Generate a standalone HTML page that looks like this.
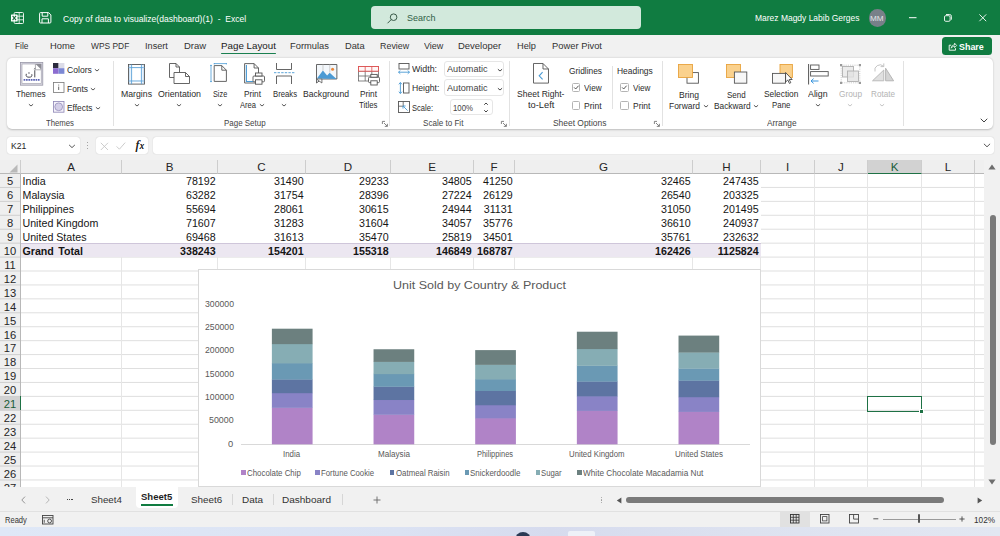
<!DOCTYPE html>
<html><head><meta charset="utf-8"><title>Excel</title>
<style>
*{box-sizing:border-box;margin:0;padding:0}
html,body{width:1000px;height:536px;overflow:hidden;background:#f1f1f1;font-family:"Liberation Sans",sans-serif;font-size:9px;color:#222}
div,span{position:absolute;white-space:nowrap}
svg{position:absolute;overflow:visible}
#title{left:0;top:0;width:1000px;height:35px;background:#107c41}
#ribbon{left:7px;top:57.5px;width:986px;height:71.5px;background:#fff;border-radius:5px;box-shadow:0 0.5px 2px rgba(0,0,0,.22)}
.sep{top:61px;width:1px;height:65px;background:#e2e2e2}
.box{background:#fff;border-radius:3px;height:17.5px;top:136.8px;box-shadow:0 0 1px rgba(0,0,0,.25)}
.dd{background:#fff;border:1px solid #e6e6e6;border-radius:3px}
.cb{width:8.6px;height:8.6px;border:1px solid #b4b4b4;border-radius:1.5px;background:#fff}
#grid{left:0;top:160px;width:984px;height:328px;background:#fff;overflow:hidden}
.ch{top:0;height:14px;background:#efefef;border-right:1px solid #cdcdcd;border-bottom:1px solid #b8b8b8;font-size:11.6px;text-align:center;line-height:14.6px;color:#262626}
.rh{left:0;width:21px;height:14.5px;background:#efefef;border-right:1px solid #b8b8b8;font-size:11.2px;text-align:center;line-height:15.4px;color:#262626}
.vl{top:14px;width:1px;height:314px;background:#e6e6e6}
.hl{left:21px;height:1px;width:963px;background:#e3e3e3}
.c{font-size:10.67px;line-height:14px;color:#151515}
.r{text-align:right}
.b{font-weight:bold;word-spacing:1.5px}
</style></head><body>
<div id="title"></div>
<svg style="left:11.4px;top:11.6px" width="13.0" height="12.0" viewBox="0 0 13.0 12.0"><rect x="3.2" y="0.5" width="9.3" height="11" rx="1" fill="none" stroke="#e8f3ec" stroke-width="1"/><path d="M8.2 0.5V11.5M3.2 4.2h9.3M3.2 7.8h9.3" stroke="#e8f3ec" stroke-width="0.9"/><rect x="0" y="2.4" width="6.6" height="7.2" rx="0.6" fill="#fff"/><path d="M1.6 3.9l3.4 4.2M5 3.9L1.6 8.1" stroke="#1c6b3d" stroke-width="1.1"/></svg>
<svg style="left:39.1px;top:11.7px" width="12.5" height="11.5" viewBox="0 0 12.5 11.5"><path d="M1.5 0.6h8l2.4 2.3v7.2a0.9 0.9 0 0 1-0.9 0.9h-9.5a0.9 0.9 0 0 1-0.9-0.9v-8.6a0.9 0.9 0 0 1 0.9-0.9z" fill="none" stroke="#fff" stroke-width="1"/><path d="M3.2 0.8v3.4h5.6v-3.4M3 11v-4.2h6.4v4.2" fill="none" stroke="#fff" stroke-width="1"/></svg>
<span style="left:62.6px;top:11.6px;line-height:14px;font-size:9.30px;color:#fff;transform:scaleX(0.921);transform-origin:0 50%;white-space:pre;">Copy of data to visualize(dashboard)(1)  -  Excel</span>
<div style="left:371.3px;top:6px;width:269.5px;height:23px;background:#d2e9dc;border-radius:4px"></div>
<svg style="left:386.5px;top:12.5px" width="11.0" height="11.0" viewBox="0 0 11.0 11.0"><circle cx="6.6" cy="4.2" r="3.3" fill="none" stroke="#3a5a48" stroke-width="1"/><path d="M4.2 6.6L0.8 10" stroke="#3a5a48" stroke-width="1" stroke-linecap="round"/></svg>
<span style="left:406.9px;top:11.3px;line-height:14px;font-size:9.60px;color:#2f5e46;transform:scaleX(0.934);transform-origin:0 50%;">Search</span>
<span style="left:755.3px;top:11.4px;line-height:14px;font-size:9.30px;color:#fff;transform:scaleX(0.911);transform-origin:0 50%;">Marez Magdy Labib Gerges</span>
<div style="left:868.6px;top:9.3px;width:17.4px;height:17.4px;border-radius:9px;background:#788089"></div>
<span style="left:870.2px;top:11.5px;line-height:14px;font-size:7.80px;color:#e4e6e8;transform:scaleX(1.047);transform-origin:0 50%;">MM</span>
<svg style="left:909.0px;top:17.0px" width="8.0" height="2.0" viewBox="0 0 8.0 2.0"><path d="M0 0.7h7.5" stroke="#fff" stroke-width="1"/></svg>
<svg style="left:943.5px;top:14.0px" width="8.0" height="8.0" viewBox="0 0 8.0 8.0"><rect x="0.5" y="1.7" width="5.6" height="5.6" rx="1.2" fill="none" stroke="#fff" stroke-width="0.9"/><path d="M2 0.5h3.6a1.8 1.8 0 0 1 1.8 1.8v3.4" fill="none" stroke="#fff" stroke-width="0.9"/></svg>
<svg style="left:978.6px;top:14.3px" width="8.0" height="8.0" viewBox="0 0 8.0 8.0"><path d="M0.4 0.4l6.8 6.8M7.2 0.4L0.4 7.2" stroke="#fff" stroke-width="0.9"/></svg>
<span style="left:15.0px;top:39.3px;line-height:14px;font-size:9.60px;color:#333;transform:scaleX(0.873);transform-origin:0 50%;">File</span>
<span style="left:49.6px;top:39.3px;line-height:14px;font-size:9.60px;color:#333;transform:scaleX(0.976);transform-origin:0 50%;">Home</span>
<span style="left:90.9px;top:39.3px;line-height:14px;font-size:9.60px;color:#333;transform:scaleX(0.876);transform-origin:0 50%;">WPS PDF</span>
<span style="left:145.4px;top:39.3px;line-height:14px;font-size:9.60px;color:#333;transform:scaleX(0.954);transform-origin:0 50%;">Insert</span>
<span style="left:184.0px;top:39.3px;line-height:14px;font-size:9.60px;color:#333;transform:scaleX(0.987);transform-origin:0 50%;">Draw</span>
<span style="left:220.9px;top:39.3px;line-height:14px;font-size:9.60px;color:#1a1a1a;transform:scaleX(1.018);transform-origin:0 50%;">Page Layout</span>
<span style="left:290.1px;top:39.3px;line-height:14px;font-size:9.60px;color:#333;transform:scaleX(0.975);transform-origin:0 50%;">Formulas</span>
<span style="left:344.6px;top:39.3px;line-height:14px;font-size:9.60px;color:#333;transform:scaleX(0.967);transform-origin:0 50%;">Data</span>
<span style="left:379.8px;top:39.3px;line-height:14px;font-size:9.60px;color:#333;transform:scaleX(0.928);transform-origin:0 50%;">Review</span>
<span style="left:423.9px;top:39.3px;line-height:14px;font-size:9.60px;color:#333;transform:scaleX(0.940);transform-origin:0 50%;">View</span>
<span style="left:458.0px;top:39.3px;line-height:14px;font-size:9.60px;color:#333;transform:scaleX(0.987);transform-origin:0 50%;">Developer</span>
<span style="left:516.6px;top:39.3px;line-height:14px;font-size:9.60px;color:#333;transform:scaleX(0.962);transform-origin:0 50%;">Help</span>
<span style="left:552.3px;top:39.3px;line-height:14px;font-size:9.60px;color:#333;transform:scaleX(0.976);transform-origin:0 50%;">Power Pivot</span>
<div style="left:221.3px;top:52.7px;width:55px;height:1.8px;background:#1a8050;border-radius:1px"></div>
<div style="left:941.6px;top:37.3px;width:50px;height:17.6px;background:#107c41;border-radius:3.5px"></div>
<svg style="left:947.5px;top:42.0px" width="9.0" height="9.0" viewBox="0 0 9.0 9.0"><path d="M3.2 3.2H1.2v5h6.3V6.2" fill="none" stroke="#fff" stroke-width="0.9"/><path d="M3.2 6.2c0.2-2 1.4-3.2 3.4-3.3V1.2L8.6 3.5 6.6 5.6V4.3c-1.6 0-2.6 0.6-3.4 1.9z" fill="none" stroke="#fff" stroke-width="0.8" stroke-linejoin="round"/></svg>
<span style="left:958.8px;top:39.8px;line-height:14px;font-size:9.60px;color:#fff;font-weight:bold;transform:scaleX(0.930);transform-origin:0 50%;">Share</span>
<div id="ribbon"></div>
<div class="sep" style="left:113.0px"></div>
<div class="sep" style="left:389.4px"></div>
<div class="sep" style="left:508.8px"></div>
<div class="sep" style="left:661.6px"></div>
<div class="sep" style="left:903.2px"></div>
<div style="left:612.2px;top:66px;width:1px;height:43px;background:#e2e2e2"></div>
<svg style="left:20.0px;top:62.0px" width="23.2" height="23.6" viewBox="0 0 23.2 23.6"><rect x="0.4" y="0.4" width="22.4" height="22.8" fill="#d9d8e2" stroke="#9a98a8" stroke-width="0.8"/><rect x="2" y="2" width="19.2" height="19.6" fill="#fff" stroke="#9c9aa8" stroke-width="0.6"/><path d="M15.6 2h5.6v5.6z" fill="#8c8c94"/><path d="M15.4 2.2v5.6h5.6" fill="none" stroke="#77777f" stroke-width="0.6"/><path d="M6.2 12.2c-0.6 2.6 1 3 2.9 3s3.2-0.4 2.8-2.6M14.8 8.6v6.4" stroke="#4a4a52" stroke-width="1" fill="none" stroke-linecap="round"/><circle cx="9" cy="11" r="0.7" fill="#4a4a52"/><path d="M13.9 7.2l1.4-0.9" stroke="#4a4a52" stroke-width="0.8"/><path d="M3.6 17.8h16" stroke="#5a62b4" stroke-width="1.7" stroke-dasharray="1.7 0.7"/></svg>
<span style="left:16.0px;top:86.8px;line-height:14px;font-size:9.30px;color:#2b2b2b;transform:scaleX(0.881);transform-origin:0 50%;">Themes</span>
<svg style="left:26.6px;top:102.0px" width="8" height="6"><path d="M2.2 2.5 L4 4.0 L5.8 2.5" fill="none" stroke="#444" stroke-width="0.9" stroke-linecap="round" stroke-linejoin="round"/></svg>
<svg style="left:53.1px;top:63.4px" width="11.4" height="10.8" viewBox="0 0 11.4 10.8"><rect x="0" y="0" width="5.6" height="5.2" fill="#2b2b3d"/><rect x="5.6" y="0" width="5.8" height="5.2" fill="#dcdce8"/><rect x="0" y="5.2" width="5.6" height="5.6" fill="#8c6cd0"/><rect x="5.6" y="5.2" width="5.8" height="5.6" fill="#7c88d4"/></svg>
<span style="left:67.2px;top:62.9px;line-height:14px;font-size:9.30px;color:#2b2b2b;transform:scaleX(0.923);transform-origin:0 50%;">Colors</span>
<svg style="left:93.0px;top:67.0px" width="8" height="6"><path d="M2.2 2.5 L4 4.0 L5.8 2.5" fill="none" stroke="#444" stroke-width="0.9" stroke-linecap="round" stroke-linejoin="round"/></svg>
<svg style="left:53.0px;top:82.4px" width="11.4" height="11.0" viewBox="0 0 11.4 11.0"><rect x="0.4" y="0.4" width="10.6" height="10.2" fill="#fff" stroke="#777" stroke-width="0.8"/><path d="M5.7 4.6v3.4M5.7 2.6v0.9" stroke="#555" stroke-width="0.9"/></svg>
<span style="left:67.2px;top:81.7px;line-height:14px;font-size:9.30px;color:#2b2b2b;transform:scaleX(0.903);transform-origin:0 50%;">Fonts</span>
<svg style="left:89.4px;top:85.8px" width="8" height="6"><path d="M2.2 2.5 L4 4.0 L5.8 2.5" fill="none" stroke="#444" stroke-width="0.9" stroke-linecap="round" stroke-linejoin="round"/></svg>
<svg style="left:53.0px;top:101.4px" width="11.4" height="11.6" viewBox="0 0 11.4 11.6"><rect x="0.4" y="0.4" width="10.6" height="10.8" fill="#f4f2fa" stroke="#8c84b4" stroke-width="0.8"/><circle cx="5.7" cy="5.8" r="3.9" fill="#d4cfe8" stroke="#8c84b4" stroke-width="0.7"/></svg>
<span style="left:67.2px;top:100.9px;line-height:14px;font-size:9.30px;color:#2b2b2b;transform:scaleX(0.899);transform-origin:0 50%;">Effects</span>
<svg style="left:93.6px;top:105.0px" width="8" height="6"><path d="M2.2 2.5 L4 4.0 L5.8 2.5" fill="none" stroke="#444" stroke-width="0.9" stroke-linecap="round" stroke-linejoin="round"/></svg>
<span style="left:46.0px;top:116.4px;line-height:14px;font-size:8.80px;color:#444;transform:scaleX(0.881);transform-origin:0 50%;">Themes</span>
<svg style="left:128.0px;top:63.9px" width="17.0" height="20.6" viewBox="0 0 17.0 20.6"><rect x="0.5" y="0.5" width="16" height="19.6" fill="#fff" stroke="#555" stroke-width="0.9"/><path d="M3.6 0.5v19.6M13.4 0.5v19.6M0.5 3.6h16M0.5 17h16" stroke="#5aa0d8" stroke-width="0.9"/><path d="M1.8 0.5v19.6M15.2 0.5v19.6" stroke="#a9cdee" stroke-width="0.8"/></svg>
<span style="left:120.6px;top:86.8px;line-height:14px;font-size:9.30px;color:#2b2b2b;transform:scaleX(0.937);transform-origin:0 50%;">Margins</span>
<svg style="left:132.6px;top:102.0px" width="8" height="6"><path d="M2.2 2.5 L4 4.0 L5.8 2.5" fill="none" stroke="#444" stroke-width="0.9" stroke-linecap="round" stroke-linejoin="round"/></svg>
<svg style="left:169.0px;top:63.4px" width="21.0" height="21.0" viewBox="0 0 21.0 21.0"><path d="M0.5 0.5h6.5l3.5 3.5v10.5h-10z" fill="#fff" stroke="#555" stroke-width="0.9"/><path d="M7 0.5v3.5h3.5" fill="none" stroke="#555" stroke-width="0.9"/><path d="M5 9.5h11.5l4 4v7h-15.5z" fill="#fff" stroke="#555" stroke-width="0.9"/><path d="M16.5 9.5v4h4" fill="none" stroke="#555" stroke-width="0.9"/></svg>
<span style="left:157.6px;top:86.8px;line-height:14px;font-size:9.30px;color:#2b2b2b;transform:scaleX(0.945);transform-origin:0 50%;">Orientation</span>
<svg style="left:175.0px;top:102.0px" width="8" height="6"><path d="M2.2 2.5 L4 4.0 L5.8 2.5" fill="none" stroke="#444" stroke-width="0.9" stroke-linecap="round" stroke-linejoin="round"/></svg>
<svg style="left:210.0px;top:63.4px" width="17.5" height="21.0" viewBox="0 0 17.5 21.0"><path d="M4.2 2.6h7.6l4.6 4.6v11.2h-12.2z" fill="#fff" stroke="#555" stroke-width="0.9"/><path d="M11.8 2.6v4.6h4.6" fill="none" stroke="#555" stroke-width="0.9"/><path d="M1 2.2v16.6M0 2.4h2M0 18.6h2M4 0.6h12.6M4.2 0v1.4M16.4 0v1.4" stroke="#4a9ad4" stroke-width="0.8" fill="none"/></svg>
<span style="left:213.0px;top:86.8px;line-height:14px;font-size:9.30px;color:#2b2b2b;transform:scaleX(0.785);transform-origin:0 50%;">Size</span>
<svg style="left:215.6px;top:102.0px" width="8" height="6"><path d="M2.2 2.5 L4 4.0 L5.8 2.5" fill="none" stroke="#444" stroke-width="0.9" stroke-linecap="round" stroke-linejoin="round"/></svg>
<svg style="left:244.0px;top:63.0px" width="21.0" height="22.0" viewBox="0 0 21.0 22.0"><path d="M0.6 0.6h9.5l4.4 4.4v15h-13.9z" fill="#fff" stroke="#555" stroke-width="0.9"/><path d="M10.1 0.6v4.4h4.4" fill="none" stroke="#555" stroke-width="0.9"/><path d="M2.4 2v16.5h7" fill="none" stroke="#4a9ad4" stroke-width="1.1"/><rect x="9" y="13" width="11.5" height="5.8" rx="1" fill="#fff" stroke="#555" stroke-width="0.9"/><rect x="11.5" y="10" width="6.5" height="3" fill="#fff" stroke="#555" stroke-width="0.9"/><rect x="11.5" y="16.8" width="6.5" height="4.4" fill="#fff" stroke="#555" stroke-width="0.9"/></svg>
<span style="left:243.6px;top:86.8px;line-height:14px;font-size:9.30px;color:#2b2b2b;transform:scaleX(0.889);transform-origin:0 50%;">Print</span>
<span style="left:239.6px;top:98.4px;line-height:14px;font-size:9.30px;color:#2b2b2b;transform:scaleX(0.815);transform-origin:0 50%;">Area</span>
<svg style="left:257.6px;top:102.4px" width="8" height="6"><path d="M2.2 2.5 L4 4.0 L5.8 2.5" fill="none" stroke="#444" stroke-width="0.9" stroke-linecap="round" stroke-linejoin="round"/></svg>
<svg style="left:274.4px;top:63.0px" width="21.0" height="21.0" viewBox="0 0 21.0 21.0"><path d="M2.5 0v6.5h15V0M2.5 21v-8h15v8" fill="#fff" stroke="#555" stroke-width="0.9"/><path d="M0 9.7h21" stroke="#4a9ad4" stroke-width="0.9" stroke-dasharray="2.4 1.2"/></svg>
<span style="left:272.6px;top:86.8px;line-height:14px;font-size:9.30px;color:#2b2b2b;transform:scaleX(0.829);transform-origin:0 50%;">Breaks</span>
<svg style="left:280.4px;top:102.0px" width="8" height="6"><path d="M2.2 2.5 L4 4.0 L5.8 2.5" fill="none" stroke="#444" stroke-width="0.9" stroke-linecap="round" stroke-linejoin="round"/></svg>
<svg style="left:316.0px;top:64.0px" width="21.4" height="19.4" viewBox="0 0 21.4 19.4"><path d="M0.5 0.5h20.4v14.5h-15l-5.4 4z" fill="#f3f7fb" stroke="#555" stroke-width="0.9"/><path d="M0.9 14.5l6-8 4.2 5 2.6-2.8 6.8 6.2z" fill="#4a9ad4"/><path d="M7 0.5v6M13.8 0.5v8" stroke="#bcbcbc" stroke-width="0.7"/><circle cx="16.6" cy="5.2" r="1.5" fill="#e8863a"/><path d="M0.5 15l5.4 0v4z" fill="#fff" stroke="#555" stroke-width="0.8"/></svg>
<span style="left:303.2px;top:86.8px;line-height:14px;font-size:9.30px;color:#2b2b2b;transform:scaleX(0.927);transform-origin:0 50%;">Background</span>
<svg style="left:358.4px;top:66.0px" width="22.0" height="19.5" viewBox="0 0 22.0 19.5"><rect x="0.5" y="0.5" width="20" height="14.5" fill="#fff" stroke="#666" stroke-width="0.8"/><path d="M0.5 5.2h20M0.5 10h20M7.2 0.5v14.5M13.8 0.5v14.5" stroke="#666" stroke-width="0.8"/><rect x="0.5" y="0.5" width="20" height="4.7" fill="#fff6f6" stroke="#e05050" stroke-width="0.9"/><path d="M7.2 0.5v4.7M13.8 0.5v4.7" stroke="#e05050" stroke-width="0.8"/><rect x="10.5" y="11.2" width="11" height="5.4" rx="1" fill="#fff" stroke="#555" stroke-width="0.9"/><rect x="12.8" y="8.4" width="6.4" height="2.8" fill="#fff" stroke="#555" stroke-width="0.9"/><rect x="12.8" y="14.8" width="6.4" height="4.2" fill="#fff" stroke="#555" stroke-width="0.9"/></svg>
<span style="left:359.6px;top:86.8px;line-height:14px;font-size:9.30px;color:#2b2b2b;transform:scaleX(0.889);transform-origin:0 50%;">Print</span>
<span style="left:359.2px;top:98.4px;line-height:14px;font-size:9.30px;color:#2b2b2b;transform:scaleX(0.841);transform-origin:0 50%;">Titles</span>
<span style="left:224.0px;top:116.4px;line-height:14px;font-size:8.80px;color:#444;transform:scaleX(0.905);transform-origin:0 50%;">Page Setup</span>
<svg style="left:381.5px;top:120.9px" width="6.0" height="6.0" viewBox="0 0 6.0 6.0"><path d="M0.4 3V0.4H3" fill="none" stroke="#666" stroke-width="0.8"/><path d="M2 2l3.2 3.2M5.4 2.8v2.6H2.8" fill="none" stroke="#666" stroke-width="0.8"/></svg>
<svg style="left:398.0px;top:63.0px" width="12.0" height="11.5" viewBox="0 0 12.0 11.5"><rect x="1" y="0.5" width="10" height="5.5" fill="#fff" stroke="#555" stroke-width="0.9"/><path d="M0.5 9.2h11M0.5 9.2l1.8-1.6M0.5 9.2l1.8 1.6M11.5 9.2l-1.8-1.6M11.5 9.2l-1.8 1.6" stroke="#4a9ad4" stroke-width="0.9" fill="none" stroke-dasharray="none"/></svg>
<span style="left:412.2px;top:62.4px;line-height:14px;font-size:9.30px;color:#2b2b2b;transform:scaleX(0.949);transform-origin:0 50%;">Width:</span>
<div class="dd" style="left:444.4px;top:60.6px;width:60px;height:16.6px"></div>
<span style="left:446.6px;top:62.4px;line-height:14px;font-size:9.30px;color:#444;transform:scaleX(0.982);transform-origin:0 50%;">Automatic</span>
<svg style="left:496.0px;top:66.8px" width="8" height="6"><path d="M2.2 2.5 L4 4.0 L5.8 2.5" fill="none" stroke="#333" stroke-width="0.9" stroke-linecap="round" stroke-linejoin="round"/></svg>
<svg style="left:398.0px;top:82.0px" width="12.0" height="12.0" viewBox="0 0 12.0 12.0"><rect x="5.5" y="1" width="5.5" height="10" fill="#fff" stroke="#555" stroke-width="0.9"/><path d="M2.4 0.5v11M2.4 0.5L0.8 2.3M2.4 0.5l1.6 1.8M2.4 11.5L0.8 9.7M2.4 11.5l1.6-1.8" stroke="#4a9ad4" stroke-width="0.9" fill="none"/></svg>
<span style="left:412.2px;top:81.4px;line-height:14px;font-size:9.30px;color:#2b2b2b;transform:scaleX(0.930);transform-origin:0 50%;">Height:</span>
<div class="dd" style="left:444.4px;top:79.4px;width:60px;height:16.6px"></div>
<span style="left:446.6px;top:81.4px;line-height:14px;font-size:9.30px;color:#444;transform:scaleX(0.982);transform-origin:0 50%;">Automatic</span>
<svg style="left:496.0px;top:85.8px" width="8" height="6"><path d="M2.2 2.5 L4 4.0 L5.8 2.5" fill="none" stroke="#333" stroke-width="0.9" stroke-linecap="round" stroke-linejoin="round"/></svg>
<svg style="left:398.0px;top:101.0px" width="12.0" height="12.0" viewBox="0 0 12.0 12.0"><rect x="0.5" y="0.5" width="11" height="11" fill="#fff" stroke="#555" stroke-width="0.9"/><path d="M0.5 5.2h4.7V0.5" fill="none" stroke="#555" stroke-width="0.8"/><path d="M5 5l4.6 4.6M5 5v2.6M5 5h2.6" stroke="#4a9ad4" stroke-width="0.9" fill="none"/></svg>
<span style="left:412.2px;top:100.8px;line-height:14px;font-size:9.30px;color:#2b2b2b;transform:scaleX(0.812);transform-origin:0 50%;">Scale:</span>
<div class="dd" style="left:450.4px;top:98.6px;width:43px;height:16.6px"></div>
<span style="left:452.6px;top:100.8px;line-height:14px;font-size:9.30px;color:#444;transform:scaleX(0.841);transform-origin:0 50%;">100%</span>
<svg style="left:482.2px;top:100.6px" width="8" height="6"><path d="M2.5 3.5 L4 2.0 L5.5 3.5" fill="none" stroke="#444" stroke-width="1.0" stroke-linecap="round" stroke-linejoin="round"/></svg>
<svg style="left:482.2px;top:108.0px" width="8" height="6"><path d="M2.5 2.5 L4 4.0 L5.5 2.5" fill="none" stroke="#444" stroke-width="1.0" stroke-linecap="round" stroke-linejoin="round"/></svg>
<span style="left:423.2px;top:116.4px;line-height:14px;font-size:8.80px;color:#444;transform:scaleX(0.918);transform-origin:0 50%;">Scale to Fit</span>
<svg style="left:500.9px;top:120.9px" width="6.0" height="6.0" viewBox="0 0 6.0 6.0"><path d="M0.4 3V0.4H3" fill="none" stroke="#666" stroke-width="0.8"/><path d="M2 2l3.2 3.2M5.4 2.8v2.6H2.8" fill="none" stroke="#666" stroke-width="0.8"/></svg>
<svg style="left:533.0px;top:63.4px" width="16.0" height="20.6" viewBox="0 0 16.0 20.6"><path d="M0.5 0.5h9.5l5.5 5.5v14.1h-15z" fill="#fff" stroke="#555" stroke-width="0.9"/><path d="M10 0.5v5.5h5.5" fill="none" stroke="#555" stroke-width="0.9"/><path d="M9.6 9.2l-3.4 3.6 3.4 3.6" fill="none" stroke="#4a9ad4" stroke-width="1.1"/></svg>
<span style="left:517.2px;top:86.8px;line-height:14px;font-size:9.30px;color:#2b2b2b;transform:scaleX(0.917);transform-origin:0 50%;">Sheet Right-</span>
<span style="left:528.2px;top:98.4px;line-height:14px;font-size:9.30px;color:#2b2b2b;transform:scaleX(1.001);transform-origin:0 50%;">to-Left</span>
<span style="left:568.6px;top:64.0px;line-height:14px;font-size:9.30px;color:#2b2b2b;transform:scaleX(0.899);transform-origin:0 50%;">Gridlines</span>
<div class="cb" style="left:571.6px;top:83.3px"></div>
<svg style="left:571.6px;top:83.3px" width="8.6" height="8.6" viewBox="0 0 8.6 8.6"><path d="M2.1 4.4l1.6 1.6 2.9-3.3" fill="none" stroke="#444" stroke-width="0.9"/></svg>
<span style="left:584.0px;top:81.4px;line-height:14px;font-size:9.30px;color:#2b2b2b;transform:scaleX(0.880);transform-origin:0 50%;">View</span>
<div class="cb" style="left:571.6px;top:101.0px"></div>
<span style="left:584.0px;top:99.4px;line-height:14px;font-size:9.30px;color:#2b2b2b;transform:scaleX(0.920);transform-origin:0 50%;">Print</span>
<span style="left:617.2px;top:64.0px;line-height:14px;font-size:9.30px;color:#2b2b2b;transform:scaleX(0.911);transform-origin:0 50%;">Headings</span>
<div class="cb" style="left:620.0px;top:83.3px"></div>
<svg style="left:620.0px;top:83.3px" width="8.6" height="8.6" viewBox="0 0 8.6 8.6"><path d="M2.1 4.4l1.6 1.6 2.9-3.3" fill="none" stroke="#444" stroke-width="0.9"/></svg>
<span style="left:632.6px;top:81.4px;line-height:14px;font-size:9.30px;color:#2b2b2b;transform:scaleX(0.870);transform-origin:0 50%;">View</span>
<div class="cb" style="left:620.0px;top:101.0px"></div>
<span style="left:632.6px;top:99.4px;line-height:14px;font-size:9.30px;color:#2b2b2b;transform:scaleX(0.910);transform-origin:0 50%;">Print</span>
<span style="left:552.6px;top:116.4px;line-height:14px;font-size:8.80px;color:#444;transform:scaleX(0.958);transform-origin:0 50%;">Sheet Options</span>
<svg style="left:653.5px;top:120.9px" width="6.0" height="6.0" viewBox="0 0 6.0 6.0"><path d="M0.4 3V0.4H3" fill="none" stroke="#666" stroke-width="0.8"/><path d="M2 2l3.2 3.2M5.4 2.8v2.6H2.8" fill="none" stroke="#666" stroke-width="0.8"/></svg>
<svg style="left:678.0px;top:64.0px" width="21.0" height="20.0" viewBox="0 0 21.0 20.0"><rect x="9" y="8.6" width="11.4" height="10.6" fill="#fff" stroke="#555" stroke-width="0.9"/><rect x="0.5" y="0.5" width="14" height="13" fill="#fad18d" stroke="#e8a33d" stroke-width="0.9"/></svg>
<span style="left:678.6px;top:87.7px;line-height:14px;font-size:9.30px;color:#2b2b2b;transform:scaleX(0.921);transform-origin:0 50%;">Bring</span>
<span style="left:669.2px;top:99.4px;line-height:14px;font-size:9.30px;color:#2b2b2b;transform:scaleX(0.909);transform-origin:0 50%;">Forward</span>
<svg style="left:701.6px;top:103.3px" width="8" height="6"><path d="M2.2 2.5 L4 4.0 L5.8 2.5" fill="none" stroke="#444" stroke-width="0.9" stroke-linecap="round" stroke-linejoin="round"/></svg>
<svg style="left:726.0px;top:64.0px" width="21.4" height="20.0" viewBox="0 0 21.4 20.0"><rect x="0.5" y="0.5" width="14" height="13" fill="#fad18d" stroke="#e8a33d" stroke-width="0.9"/><rect x="8.4" y="8" width="12.4" height="11.2" fill="#f7f7f7" stroke="#555" stroke-width="0.9"/></svg>
<span style="left:726.6px;top:87.7px;line-height:14px;font-size:9.30px;color:#2b2b2b;transform:scaleX(0.856);transform-origin:0 50%;">Send</span>
<span style="left:714.0px;top:99.4px;line-height:14px;font-size:9.30px;color:#2b2b2b;transform:scaleX(0.896);transform-origin:0 50%;">Backward</span>
<svg style="left:752.0px;top:103.3px" width="8" height="6"><path d="M2.2 2.5 L4 4.0 L5.8 2.5" fill="none" stroke="#444" stroke-width="0.9" stroke-linecap="round" stroke-linejoin="round"/></svg>
<svg style="left:771.5px;top:64.0px" width="21.0" height="20.0" viewBox="0 0 21.0 20.0"><rect x="8" y="0.5" width="12.4" height="13" fill="#fad18d" stroke="#e8a33d" stroke-width="0.9"/><rect x="0.5" y="9.4" width="13" height="9.8" fill="#f7f7f7" stroke="#555" stroke-width="0.9"/><path d="M13.6 8.5v9.5l2.2-2 1.6 3.4 1.4-0.7-1.6-3.2h3z" fill="#fff" stroke="#333" stroke-width="0.8" stroke-linejoin="round"/></svg>
<span style="left:764.2px;top:86.8px;line-height:14px;font-size:9.30px;color:#2b2b2b;transform:scaleX(0.899);transform-origin:0 50%;">Selection</span>
<span style="left:772.2px;top:98.4px;line-height:14px;font-size:9.30px;color:#2b2b2b;transform:scaleX(0.847);transform-origin:0 50%;">Pane</span>
<svg style="left:808.0px;top:63.5px" width="21.0" height="21.0" viewBox="0 0 21.0 21.0"><path d="M0.6 0v20.5" stroke="#555" stroke-width="1"/><rect x="2.6" y="1" width="8.4" height="4.4" fill="#fff" stroke="#555" stroke-width="0.9"/><rect x="2.6" y="7.6" width="17.6" height="4.4" fill="#fff" stroke="#555" stroke-width="0.9"/><path d="M10.5 17h-7.5M3 17l2.6-2.4M3 17l2.6 2.4" fill="none" stroke="#3a96dd" stroke-width="1"/></svg>
<span style="left:808.0px;top:86.8px;line-height:14px;font-size:9.30px;color:#2b2b2b;transform:scaleX(0.948);transform-origin:0 50%;">Align</span>
<svg style="left:814.0px;top:102.0px" width="8" height="6"><path d="M2.2 2.5 L4 4.0 L5.8 2.5" fill="none" stroke="#444" stroke-width="0.9" stroke-linecap="round" stroke-linejoin="round"/></svg>
<svg style="left:840.0px;top:64.0px" width="21.0" height="20.0" viewBox="0 0 21.0 20.0"><rect x="1.2" y="1.2" width="18.6" height="17.6" fill="none" stroke="#c4c4c4" stroke-width="0.8" stroke-dasharray="1.2 1"/><rect x="2.5" y="2.5" width="11" height="10.5" fill="#ececec" stroke="#b0b0b0" stroke-width="0.9"/><rect x="7.5" y="7" width="11" height="10.5" fill="#e2e2e2" fill-opacity="0.8" stroke="#b0b0b0" stroke-width="0.9"/><rect x="0" y="0" width="2.2" height="2.2" fill="#999"/><rect x="18.8" y="0" width="2.2" height="2.2" fill="#999"/><rect x="0" y="17.8" width="2.2" height="2.2" fill="#999"/><rect x="18.8" y="17.8" width="2.2" height="2.2" fill="#999"/></svg>
<span style="left:838.6px;top:86.8px;line-height:14px;font-size:9.30px;color:#b4b4b4;transform:scaleX(0.890);transform-origin:0 50%;">Group</span>
<svg style="left:846.0px;top:102.0px" width="8" height="6"><path d="M2.2 2.5 L4 4.0 L5.8 2.5" fill="none" stroke="#bdbdbd" stroke-width="0.9" stroke-linecap="round" stroke-linejoin="round"/></svg>
<svg style="left:872.0px;top:63.0px" width="22.0" height="19.0" viewBox="0 0 22.0 19.0"><path d="M0.5 17.8h11.3V7z" fill="#e0e0e0" stroke="#b5b5b5" stroke-width="0.9" stroke-linejoin="round"/><path d="M13.6 17.8h8V5.2z" fill="#d4d4d4" stroke="#b0b0b0" stroke-width="0.9" stroke-linejoin="round" transform="translate(35.2 0) scale(-1 1)"/><path d="M3 8.5a5.2 5.2 0 0 1 8.6-5.2M11.8 0.4v3.2h-3.2" fill="none" stroke="#bdbdbd" stroke-width="0.9"/></svg>
<span style="left:870.6px;top:86.8px;line-height:14px;font-size:9.30px;color:#b4b4b4;transform:scaleX(0.876);transform-origin:0 50%;">Rotate</span>
<svg style="left:878.4px;top:102.0px" width="8" height="6"><path d="M2.2 2.5 L4 4.0 L5.8 2.5" fill="none" stroke="#bdbdbd" stroke-width="0.9" stroke-linecap="round" stroke-linejoin="round"/></svg>
<span style="left:767.0px;top:116.4px;line-height:14px;font-size:8.80px;color:#444;transform:scaleX(0.946);transform-origin:0 50%;">Arrange</span>
<svg style="left:979.6px;top:117.0px" width="8" height="6"><path d="M1.0 2.0 L4 5.0 L7.0 2.0" fill="none" stroke="#444" stroke-width="1.0" stroke-linecap="round" stroke-linejoin="round"/></svg>
<div class="box" style="left:7px;width:72.6px"></div>
<span style="left:11.2px;top:139.0px;line-height:14px;font-size:9.20px;color:#262626;transform:scaleX(0.941);transform-origin:0 50%;">K21</span>
<svg style="left:68.0px;top:143.0px" width="8" height="6"><path d="M1.4 2.2 L4 4.6 L6.6 2.2" fill="none" stroke="#444" stroke-width="0.9" stroke-linecap="round" stroke-linejoin="round"/></svg>
<div style="left:87px;top:142px;width:1.4px;height:1.4px;background:#8a8a8a;border-radius:1px"></div>
<div style="left:87px;top:145px;width:1.4px;height:1.4px;background:#8a8a8a;border-radius:1px"></div>
<div style="left:87px;top:148px;width:1.4px;height:1.4px;background:#8a8a8a;border-radius:1px"></div>
<div class="box" style="left:96px;width:52px"></div>
<svg style="left:100.0px;top:141.5px" width="9.0" height="9.0" viewBox="0 0 9.0 9.0"><path d="M0.8 0.8l7.2 7.2M8 0.8L0.8 8" stroke="#c6c6c6" stroke-width="0.9"/></svg>
<svg style="left:116.0px;top:142.0px" width="10.0" height="8.0" viewBox="0 0 10.0 8.0"><path d="M0.6 4.4l2.8 2.8L9.2 0.6" fill="none" stroke="#c6c6c6" stroke-width="0.9"/></svg>
<span style="left:135.6px;top:138.2px;font-family:'Liberation Serif',serif;font-style:italic;font-size:13px;line-height:14px;color:#222;text-shadow:0 0 0.3px #222">f</span>
<span style="left:139.8px;top:141.4px;font-family:'Liberation Serif',serif;font-style:italic;font-size:9.5px;line-height:10px;color:#222;text-shadow:0 0 0.3px #222">x</span>
<div class="box" style="left:153px;width:840.5px"></div>
<svg style="left:983.0px;top:141.6px" width="8" height="6"><path d="M1.2 2.1 L4 4.8 L6.8 2.1" fill="none" stroke="#444" stroke-width="0.9" stroke-linecap="round" stroke-linejoin="round"/></svg>
<div id="grid">
<div class="ch" style="left:0;width:21px"></div>
<svg style="left:9.0px;top:3.5px" width="9.0" height="9.0" viewBox="0 0 9.0 9.0"><path d="M8.5 0.5v8h-8z" fill="#b9b9b9"/></svg>
<div class="ch" style="left:21px;width:101px">A</div>
<div class="ch" style="left:122px;width:96px">B</div>
<div class="ch" style="left:218px;width:88px">C</div>
<div class="ch" style="left:306px;width:85px">D</div>
<div class="ch" style="left:391px;width:83px">E</div>
<div class="ch" style="left:474px;width:41px">F</div>
<div class="ch" style="left:515px;width:178px">G</div>
<div class="ch" style="left:693px;width:68px">H</div>
<div class="ch" style="left:761px;width:54px">I</div>
<div class="ch" style="left:815px;width:53px">J</div>
<div class="ch" style="left:868px;width:54px;background:#d2d2d2;color:#185c37;border-bottom:1.5px solid #1e7145;line-height:14.6px">K</div>
<div class="ch" style="left:922px;width:53px">L</div>
<div class="ch" style="left:975px;width:15px"></div>
<div class="rh" style="top:13.5px"></div>
<div class="rh" style="top:27.4px"></div>
<div class="rh" style="top:41.4px"></div>
<div class="rh" style="top:55.3px"></div>
<div class="rh" style="top:69.2px"></div>
<div class="rh" style="top:83.2px"></div>
<div class="rh" style="top:97.1px"></div>
<div class="rh" style="top:111.0px"></div>
<div class="rh" style="top:124.9px"></div>
<div class="rh" style="top:138.9px"></div>
<div class="rh" style="top:152.8px"></div>
<div class="rh" style="top:166.7px"></div>
<div class="rh" style="top:180.7px"></div>
<div class="rh" style="top:194.6px"></div>
<div class="rh" style="top:208.5px"></div>
<div class="rh" style="top:222.4px"></div>
<div class="rh" style="top:236.4px;background:#d2d2d2;color:#185c37;border-right:1.5px solid #1e7145"></div>
<div class="rh" style="top:250.3px"></div>
<div class="rh" style="top:264.2px"></div>
<div class="rh" style="top:278.2px"></div>
<div class="rh" style="top:292.1px"></div>
<div class="rh" style="top:306.0px"></div>
<div class="rh" style="top:320.0px"></div>
<svg style="left:0;top:0" width="984" height="328" stroke="#dfdfdf" stroke-width="1"><path d="M21 27.43H984"/><path d="M21 41.36H984"/><path d="M21 55.29H984"/><path d="M21 69.22H984"/><path d="M21 83.15H984"/><path d="M21 97.08H984"/><path d="M21 111.01H984"/><path d="M21 124.94H984"/><path d="M21 138.87H984"/><path d="M21 152.80H984"/><path d="M21 166.73H984"/><path d="M21 180.66H984"/><path d="M21 194.59H984"/><path d="M21 208.52H984"/><path d="M21 222.45H984"/><path d="M21 236.38H984"/><path d="M21 250.31H984"/><path d="M21 264.24H984"/><path d="M21 278.17H984"/><path d="M21 292.10H984"/><path d="M21 306.03H984"/><path d="M21 319.96H984"/><path d="M21 333.89H984"/></svg>
<div class="vl" style="left:121px"></div>
<div class="vl" style="left:217px"></div>
<div class="vl" style="left:305px"></div>
<div class="vl" style="left:390px"></div>
<div class="vl" style="left:473px"></div>
<div class="vl" style="left:514px"></div>
<div class="vl" style="left:692px"></div>
<div class="vl" style="left:760px"></div>
<div class="vl" style="left:814px"></div>
<div class="vl" style="left:867px"></div>
<div class="vl" style="left:921px"></div>
<div class="vl" style="left:974px"></div>
<div class="vl" style="left:989px"></div>
<svg style="left:0;top:0" width="21" height="328" stroke="#cfcfcf" stroke-width="1"><path d="M0 27.43H20"/><path d="M0 41.36H20"/><path d="M0 55.29H20"/><path d="M0 69.22H20"/><path d="M0 83.15H20"/><path d="M0 97.08H20"/><path d="M0 111.01H20"/><path d="M0 124.94H20"/><path d="M0 138.87H20"/><path d="M0 152.80H20"/><path d="M0 166.73H20"/><path d="M0 180.66H20"/><path d="M0 194.59H20"/><path d="M0 208.52H20"/><path d="M0 222.45H20"/><path d="M0 236.38H20"/><path d="M0 250.31H20"/><path d="M0 264.24H20"/><path d="M0 278.17H20"/><path d="M0 292.10H20"/><path d="M0 306.03H20"/><path d="M0 319.96H20"/><path d="M0 333.89H20"/></svg>
<span style="left:0;width:20px;text-align:center;top:13px;line-height:16px;font-size:11.2px;color:#262626">5</span>
<span style="left:0;width:20px;text-align:center;top:27px;line-height:16px;font-size:11.2px;color:#262626">6</span>
<span style="left:0;width:20px;text-align:center;top:41px;line-height:16px;font-size:11.2px;color:#262626">7</span>
<span style="left:0;width:20px;text-align:center;top:55px;line-height:16px;font-size:11.2px;color:#262626">8</span>
<span style="left:0;width:20px;text-align:center;top:69px;line-height:16px;font-size:11.2px;color:#262626">9</span>
<span style="left:0;width:20px;text-align:center;top:83px;line-height:16px;font-size:11.2px;color:#262626">10</span>
<span style="left:0;width:20px;text-align:center;top:97px;line-height:16px;font-size:11.2px;color:#262626">11</span>
<span style="left:0;width:20px;text-align:center;top:111px;line-height:16px;font-size:11.2px;color:#262626">12</span>
<span style="left:0;width:20px;text-align:center;top:125px;line-height:16px;font-size:11.2px;color:#262626">13</span>
<span style="left:0;width:20px;text-align:center;top:139px;line-height:16px;font-size:11.2px;color:#262626">14</span>
<span style="left:0;width:20px;text-align:center;top:153px;line-height:16px;font-size:11.2px;color:#262626">15</span>
<span style="left:0;width:20px;text-align:center;top:167px;line-height:16px;font-size:11.2px;color:#262626">16</span>
<span style="left:0;width:20px;text-align:center;top:180px;line-height:16px;font-size:11.2px;color:#262626">17</span>
<span style="left:0;width:20px;text-align:center;top:194px;line-height:16px;font-size:11.2px;color:#262626">18</span>
<span style="left:0;width:20px;text-align:center;top:208px;line-height:16px;font-size:11.2px;color:#262626">19</span>
<span style="left:0;width:20px;text-align:center;top:222px;line-height:16px;font-size:11.2px;color:#262626">20</span>
<span style="left:0;width:20px;text-align:center;top:236px;line-height:16px;font-size:11.2px;color:#185c37">21</span>
<span style="left:0;width:20px;text-align:center;top:250px;line-height:16px;font-size:11.2px;color:#262626">22</span>
<span style="left:0;width:20px;text-align:center;top:264px;line-height:16px;font-size:11.2px;color:#262626">23</span>
<span style="left:0;width:20px;text-align:center;top:278px;line-height:16px;font-size:11.2px;color:#262626">24</span>
<span style="left:0;width:20px;text-align:center;top:292px;line-height:16px;font-size:11.2px;color:#262626">25</span>
<span style="left:0;width:20px;text-align:center;top:306px;line-height:16px;font-size:11.2px;color:#262626">26</span>
<span style="left:0;width:20px;text-align:center;top:320px;line-height:16px;font-size:11.2px;color:#262626">27</span>
<div style="left:21px;top:14px;width:740px;height:69.5px;background:#fff"></div>
<div style="left:21px;top:83.2px;width:740px;height:13.6px;background:#ece7f1;border-top:1px solid #cfc6da"></div>
<span class="c" style="left:22.5px;top:14.0px">India</span>
<span class="c r" style="left:122px;width:93.6px;top:14.0px">78192</span>
<span class="c r" style="left:218px;width:85.6px;top:14.0px">31490</span>
<span class="c r" style="left:306px;width:82.6px;top:14.0px">29233</span>
<span class="c r" style="left:391px;width:80.6px;top:14.0px">34805</span>
<span class="c r" style="left:474px;width:38.6px;top:14.0px">41250</span>
<span class="c r" style="left:515px;width:175.6px;top:14.0px">32465</span>
<span class="c r" style="left:693px;width:65.6px;top:14.0px">247435</span>
<span class="c" style="left:22.5px;top:28.0px">Malaysia</span>
<span class="c r" style="left:122px;width:93.6px;top:28.0px">63282</span>
<span class="c r" style="left:218px;width:85.6px;top:28.0px">31754</span>
<span class="c r" style="left:306px;width:82.6px;top:28.0px">28396</span>
<span class="c r" style="left:391px;width:80.6px;top:28.0px">27224</span>
<span class="c r" style="left:474px;width:38.6px;top:28.0px">26129</span>
<span class="c r" style="left:515px;width:175.6px;top:28.0px">26540</span>
<span class="c r" style="left:693px;width:65.6px;top:28.0px">203325</span>
<span class="c" style="left:22.5px;top:42.0px">Philippines</span>
<span class="c r" style="left:122px;width:93.6px;top:42.0px">55694</span>
<span class="c r" style="left:218px;width:85.6px;top:42.0px">28061</span>
<span class="c r" style="left:306px;width:82.6px;top:42.0px">30615</span>
<span class="c r" style="left:391px;width:80.6px;top:42.0px">24944</span>
<span class="c r" style="left:474px;width:38.6px;top:42.0px">31131</span>
<span class="c r" style="left:515px;width:175.6px;top:42.0px">31050</span>
<span class="c r" style="left:693px;width:65.6px;top:42.0px">201495</span>
<span class="c" style="left:22.5px;top:56.0px">United Kingdom</span>
<span class="c r" style="left:122px;width:93.6px;top:56.0px">71607</span>
<span class="c r" style="left:218px;width:85.6px;top:56.0px">31283</span>
<span class="c r" style="left:306px;width:82.6px;top:56.0px">31604</span>
<span class="c r" style="left:391px;width:80.6px;top:56.0px">34057</span>
<span class="c r" style="left:474px;width:38.6px;top:56.0px">35776</span>
<span class="c r" style="left:515px;width:175.6px;top:56.0px">36610</span>
<span class="c r" style="left:693px;width:65.6px;top:56.0px">240937</span>
<span class="c" style="left:22.5px;top:70.0px">United States</span>
<span class="c r" style="left:122px;width:93.6px;top:70.0px">69468</span>
<span class="c r" style="left:218px;width:85.6px;top:70.0px">31613</span>
<span class="c r" style="left:306px;width:82.6px;top:70.0px">35470</span>
<span class="c r" style="left:391px;width:80.6px;top:70.0px">25819</span>
<span class="c r" style="left:474px;width:38.6px;top:70.0px">34501</span>
<span class="c r" style="left:515px;width:175.6px;top:70.0px">35761</span>
<span class="c r" style="left:693px;width:65.6px;top:70.0px">232632</span>
<span class="c b" style="left:22.5px;top:84.0px">Grand Total</span>
<span class="c b r" style="left:122px;width:93.6px;top:84.0px">338243</span>
<span class="c b r" style="left:218px;width:85.6px;top:84.0px">154201</span>
<span class="c b r" style="left:306px;width:82.6px;top:84.0px">155318</span>
<span class="c b r" style="left:391px;width:80.6px;top:84.0px">146849</span>
<span class="c b r" style="left:474px;width:38.6px;top:84.0px">168787</span>
<span class="c b r" style="left:515px;width:175.6px;top:84.0px">162426</span>
<span class="c b r" style="left:693px;width:65.6px;top:84.0px">1125824</span>
<div style="left:867px;top:235.6px;width:55.2px;height:16px;border:1.6px solid #1e7145"></div>
<div style="left:919.2px;top:248.6px;width:5px;height:5px;background:#1e7145;border:1px solid #fff"></div>
</div>
<div style="left:198.0px;top:269.0px;width:563.0px;height:218.0px;background:#fff;border:1px solid #d9d9d9"></div>
<span style="left:392.6px;top:277.5px;line-height:14px;font-size:11.60px;color:#595959;transform:scaleX(1.078);transform-origin:0 50%;">Unit Sold by Country &amp; Product</span>
<span style="left:228.4px;top:436.5px;line-height:14px;font-size:8.60px;color:#595959;transform:scaleX(1.087);transform-origin:0 50%;">0</span>
<span style="left:209.0px;top:413.2px;line-height:14px;font-size:8.60px;color:#595959;transform:scaleX(1.029);transform-origin:0 50%;">50000</span>
<span style="left:204.6px;top:389.9px;line-height:14px;font-size:8.60px;color:#595959;transform:scaleX(1.011);transform-origin:0 50%;">100000</span>
<span style="left:204.6px;top:366.6px;line-height:14px;font-size:8.60px;color:#595959;transform:scaleX(1.011);transform-origin:0 50%;">150000</span>
<span style="left:204.6px;top:343.3px;line-height:14px;font-size:8.60px;color:#595959;transform:scaleX(1.011);transform-origin:0 50%;">200000</span>
<span style="left:204.6px;top:320.0px;line-height:14px;font-size:8.60px;color:#595959;transform:scaleX(1.011);transform-origin:0 50%;">250000</span>
<span style="left:204.6px;top:296.7px;line-height:14px;font-size:8.60px;color:#595959;transform:scaleX(1.011);transform-origin:0 50%;">300000</span>
<div style="left:241.4px;top:443.6px;width:508.4px;height:1px;background:#d9d9d9"></div>
<span style="left:283.3px;top:447.0px;line-height:14px;font-size:8.30px;color:#595959;transform:scaleX(0.945);transform-origin:0 50%;">India</span>
<span style="left:377.5px;top:447.0px;line-height:14px;font-size:8.30px;color:#595959;transform:scaleX(0.977);transform-origin:0 50%;">Malaysia</span>
<span style="left:477.1px;top:447.0px;line-height:14px;font-size:8.30px;color:#595959;transform:scaleX(0.897);transform-origin:0 50%;">Philippines</span>
<span style="left:569.1px;top:447.0px;line-height:14px;font-size:8.30px;color:#595959;transform:scaleX(0.940);transform-origin:0 50%;">United Kingdom</span>
<span style="left:674.5px;top:447.0px;line-height:14px;font-size:8.30px;color:#595959;transform:scaleX(0.963);transform-origin:0 50%;">United States</span>
<svg style="left:0;top:0" width="1000" height="536"><rect x="271.88" y="407.56" width="40.7" height="36.74" fill="#b083c7"/><rect x="271.88" y="392.89" width="40.7" height="14.97" fill="#8983c6"/><rect x="271.88" y="379.27" width="40.7" height="13.92" fill="#5d74a2"/><rect x="271.88" y="363.05" width="40.7" height="16.52" fill="#6a99b4"/><rect x="271.88" y="343.82" width="40.7" height="19.52" fill="#86adb4"/><rect x="271.88" y="328.70" width="40.7" height="15.43" fill="#6c807f"/><rect x="373.54" y="414.51" width="40.7" height="29.79" fill="#b083c7"/><rect x="373.54" y="399.71" width="40.7" height="15.10" fill="#8983c6"/><rect x="373.54" y="386.48" width="40.7" height="13.53" fill="#5d74a2"/><rect x="373.54" y="373.79" width="40.7" height="12.99" fill="#6a99b4"/><rect x="373.54" y="361.62" width="40.7" height="12.48" fill="#86adb4"/><rect x="373.54" y="349.25" width="40.7" height="12.67" fill="#6c807f"/><rect x="475.20" y="418.05" width="40.7" height="26.25" fill="#b083c7"/><rect x="475.20" y="404.97" width="40.7" height="13.38" fill="#8983c6"/><rect x="475.20" y="390.70" width="40.7" height="14.57" fill="#5d74a2"/><rect x="475.20" y="379.08" width="40.7" height="11.92" fill="#6a99b4"/><rect x="475.20" y="364.57" width="40.7" height="14.81" fill="#86adb4"/><rect x="475.20" y="350.10" width="40.7" height="14.77" fill="#6c807f"/><rect x="576.86" y="410.63" width="40.7" height="33.67" fill="#b083c7"/><rect x="576.86" y="396.05" width="40.7" height="14.88" fill="#8983c6"/><rect x="576.86" y="381.33" width="40.7" height="15.03" fill="#5d74a2"/><rect x="576.86" y="365.46" width="40.7" height="16.17" fill="#6a99b4"/><rect x="576.86" y="348.78" width="40.7" height="16.97" fill="#86adb4"/><rect x="576.86" y="331.72" width="40.7" height="17.36" fill="#6c807f"/><rect x="678.52" y="411.63" width="40.7" height="32.67" fill="#b083c7"/><rect x="678.52" y="396.90" width="40.7" height="15.03" fill="#8983c6"/><rect x="678.52" y="380.37" width="40.7" height="16.83" fill="#5d74a2"/><rect x="678.52" y="368.34" width="40.7" height="12.33" fill="#6a99b4"/><rect x="678.52" y="352.26" width="40.7" height="16.38" fill="#86adb4"/><rect x="678.52" y="335.59" width="40.7" height="16.96" fill="#6c807f"/></svg>
<div style="left:241.4px;top:470.3px;width:4.4px;height:4.4px;background:#b083c7"></div>
<span style="left:246.6px;top:465.5px;line-height:14px;font-size:8.30px;color:#595959;transform:scaleX(0.950);transform-origin:0 50%;">Chocolate Chip</span>
<div style="left:315.4px;top:470.3px;width:4.4px;height:4.4px;background:#8983c6"></div>
<span style="left:321.3px;top:465.5px;line-height:14px;font-size:8.30px;color:#595959;transform:scaleX(0.936);transform-origin:0 50%;">Fortune Cookie</span>
<div style="left:389.9px;top:470.3px;width:4.4px;height:4.4px;background:#5d74a2"></div>
<span style="left:395.6px;top:465.5px;line-height:14px;font-size:8.30px;color:#595959;transform:scaleX(0.945);transform-origin:0 50%;">Oatmeal Raisin</span>
<div style="left:464.7px;top:470.3px;width:4.4px;height:4.4px;background:#6a99b4"></div>
<span style="left:470.2px;top:465.5px;line-height:14px;font-size:8.30px;color:#595959;transform:scaleX(0.958);transform-origin:0 50%;">Snickerdoodle</span>
<div style="left:535.7px;top:470.3px;width:4.4px;height:4.4px;background:#86adb4"></div>
<span style="left:541.0px;top:465.5px;line-height:14px;font-size:8.30px;color:#595959;transform:scaleX(0.930);transform-origin:0 50%;">Sugar</span>
<div style="left:577.4px;top:470.3px;width:4.4px;height:4.4px;background:#6c807f"></div>
<span style="left:582.6px;top:465.5px;line-height:14px;font-size:8.30px;color:#595959;transform:scaleX(0.992);transform-origin:0 50%;">White Chocolate Macadamia Nut</span>
<div style="left:984px;top:160px;width:16px;height:328px;background:#f1f1f1"></div>
<svg style="left:988.0px;top:163.5px" width="8.0" height="6.0" viewBox="0 0 8.0 6.0"><path d="M4 0.6L7.6 5.4H0.4z" fill="#6e6e6e"/></svg>
<svg style="left:988.0px;top:479.0px" width="8.0" height="6.0" viewBox="0 0 8.0 6.0"><path d="M4 5.4L7.6 0.6H0.4z" fill="#6e6e6e"/></svg>
<div style="left:989.5px;top:215.4px;width:6px;height:230px;background:#7a7a7a;border-radius:3px"></div>
<div style="left:0;top:487px;width:1000px;height:24px;background:#f1f1f1"></div>
<svg style="left:21.0px;top:495.5px" width="5.0" height="8.0" viewBox="0 0 5.0 8.0"><path d="M4 0.6L0.8 4 4 7.4" fill="none" stroke="#8a8a8a" stroke-width="0.9"/></svg>
<svg style="left:44.5px;top:495.5px" width="5.0" height="8.0" viewBox="0 0 5.0 8.0"><path d="M1 0.6L4.2 4 1 7.4" fill="none" stroke="#b0b0b0" stroke-width="0.9"/></svg>
<div style="left:66.9px;top:498.8px;width:1.4px;height:1.4px;background:#444"></div>
<div style="left:69.1px;top:498.8px;width:1.4px;height:1.4px;background:#444"></div>
<div style="left:71.3px;top:498.8px;width:1.4px;height:1.4px;background:#444"></div>
<span style="left:91.0px;top:492.8px;line-height:14px;font-size:9.60px;color:#333;transform:scaleX(1.016);transform-origin:0 50%;">Sheet4</span>
<div style="left:136.3px;top:487px;width:42px;height:21.4px;background:#fff;border-radius:0 0 4px 4px"></div>
<span style="left:141.0px;top:490.3px;line-height:14px;font-size:9.60px;color:#1f1f1f;font-weight:bold;transform:scaleX(0.991);transform-origin:0 50%;">Sheet5</span>
<div style="left:141.4px;top:504px;width:31.2px;height:1.6px;background:#107c41"></div>
<span style="left:191.2px;top:492.8px;line-height:14px;font-size:9.60px;color:#333;transform:scaleX(1.025);transform-origin:0 50%;">Sheet6</span>
<span style="left:242.1px;top:492.8px;line-height:14px;font-size:9.60px;color:#333;transform:scaleX(1.036);transform-origin:0 50%;">Data</span>
<span style="left:282.1px;top:492.8px;line-height:14px;font-size:9.60px;color:#333;transform:scaleX(1.043);transform-origin:0 50%;">Dashboard</span>
<div style="left:232.2px;top:494px;width:1px;height:11px;background:#d6d6d6"></div>
<div style="left:272.5px;top:494px;width:1px;height:11px;background:#d6d6d6"></div>
<div style="left:341.5px;top:494px;width:1px;height:11px;background:#d6d6d6"></div>
<svg style="left:372.5px;top:495.5px" width="8.0" height="8.0" viewBox="0 0 8.0 8.0"><path d="M4 0.5v7M0.5 4h7" stroke="#666" stroke-width="0.9"/></svg>
<div style="left:601px;top:497.0px;width:1.2px;height:1.2px;background:#9a9a9a;border-radius:1px"></div>
<div style="left:601px;top:499.4px;width:1.2px;height:1.2px;background:#9a9a9a;border-radius:1px"></div>
<div style="left:601px;top:501.8px;width:1.2px;height:1.2px;background:#9a9a9a;border-radius:1px"></div>
<svg style="left:616.0px;top:496.5px" width="6.0" height="7.0" viewBox="0 0 6.0 7.0"><path d="M5.4 0.4L0.8 3.5l4.6 3.1z" fill="#555"/></svg>
<svg style="left:977.0px;top:496.5px" width="6.0" height="7.0" viewBox="0 0 6.0 7.0"><path d="M0.6 0.4L5.2 3.5 0.6 6.6z" fill="#555"/></svg>
<div style="left:626px;top:496.5px;width:318px;height:6.6px;background:#7a7a7a;border-radius:3.3px"></div>
<div style="left:0;top:511px;width:1000px;height:17px;background:#f1f1f1;border-top:1px solid #e1e1e1"></div>
<span style="left:5.2px;top:513.1px;line-height:14px;font-size:8.60px;color:#333;transform:scaleX(0.877);transform-origin:0 50%;">Ready</span>
<svg style="left:42.0px;top:515.0px" width="11.5" height="9.5" viewBox="0 0 11.5 9.5"><rect x="0.5" y="0.5" width="10.5" height="8.5" fill="none" stroke="#444" stroke-width="0.9"/><path d="M0.5 2.8h10.5" stroke="#444" stroke-width="0.9"/><circle cx="7.6" cy="6" r="1.9" fill="none" stroke="#444" stroke-width="0.9"/><path d="M2.2 4.8v3" stroke="#444" stroke-width="0.9"/></svg>
<div style="left:780px;top:512px;width:30px;height:16px;background:#e1e1e1"></div>
<svg style="left:790.0px;top:514.0px" width="9.5" height="9.5" viewBox="0 0 9.5 9.5"><rect x="0.5" y="0.5" width="8.5" height="8.5" fill="none" stroke="#333" stroke-width="0.9"/><path d="M0.5 3.3h8.5M0.5 6.2h8.5M3.3 0.5v8.5M6.2 0.5v8.5" stroke="#333" stroke-width="0.8"/></svg>
<svg style="left:820.0px;top:514.0px" width="9.5" height="9.5" viewBox="0 0 9.5 9.5"><rect x="0.5" y="0.5" width="8.5" height="8.5" fill="none" stroke="#444" stroke-width="0.9"/><rect x="2.6" y="2.6" width="4.3" height="4.3" fill="none" stroke="#444" stroke-width="0.8"/></svg>
<svg style="left:849.0px;top:514.0px" width="10.0" height="9.5" viewBox="0 0 10.0 9.5"><rect x="0.5" y="0.5" width="9" height="8.5" fill="none" stroke="#444" stroke-width="0.9"/><path d="M4.6 0.5v4.6h4.9" fill="none" stroke="#444" stroke-width="0.9"/></svg>
<svg style="left:872.5px;top:518.0px" width="6.0" height="2.0" viewBox="0 0 6.0 2.0"><path d="M0.3 0.8h5" stroke="#444" stroke-width="0.9"/></svg>
<div style="left:882.5px;top:518.5px;width:73.5px;height:1px;background:#9a9a9a"></div>
<div style="left:917.8px;top:514px;width:2.6px;height:9.4px;background:#555;border-radius:1px"></div>
<svg style="left:958.5px;top:516.0px" width="6.0" height="6.0" viewBox="0 0 6.0 6.0"><path d="M3 0.4v5.2M0.4 3h5.2" stroke="#444" stroke-width="0.9"/></svg>
<span style="left:973.6px;top:513.1px;line-height:14px;font-size:8.60px;color:#333;transform:scaleX(0.955);transform-origin:0 50%;">102%</span>
<div style="left:0;top:527.4px;width:1000px;height:9px;background:linear-gradient(90deg,#dfe8f7 0%,#dbe2f3 40%,#d6dbee 55%,#dde2f0 75%,#e2e7f2 100%)"></div>
<div style="left:515px;top:532px;width:16px;height:16px;border-radius:8px;background:#2b3a55"></div>
<div style="left:568px;top:530.5px;width:27px;height:7px;background:#eef1f8;border-radius:2px 2px 0 0"></div>
</body></html>
